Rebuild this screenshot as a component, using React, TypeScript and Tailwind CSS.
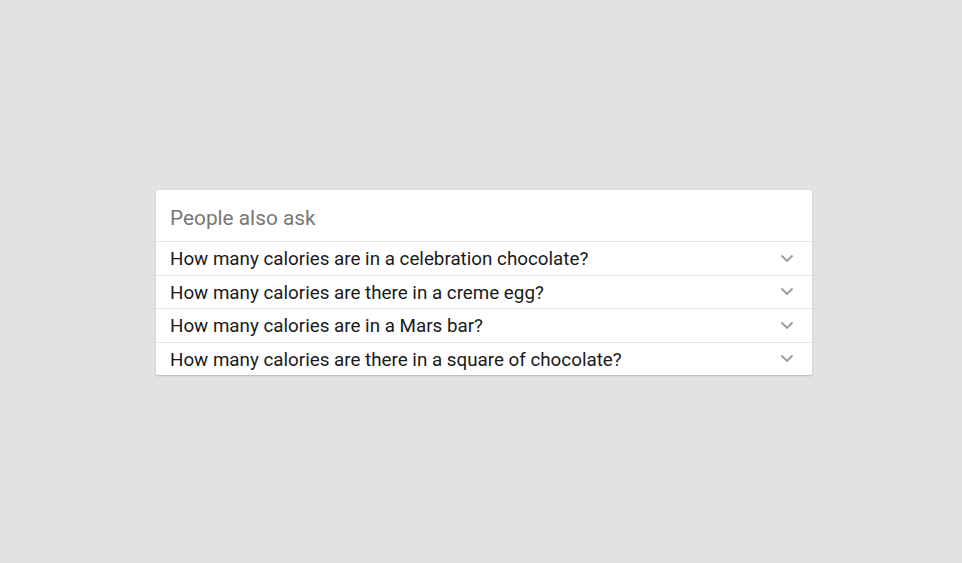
import React from "react";

const items = [
  "How many calories are in a celebration chocolate?",
  "How many calories are there in a creme egg?",
  "How many calories are in a Mars bar?",
  "How many calories are there in a square of chocolate?",
];

function Chevron() {
  return (
    <svg width="14" height="9" viewBox="0 0 14 9" fill="none">
      <path d="M1.5 1.5 L7 7 L12.5 1.5" stroke="#9a9a9a" strokeWidth="1.8" />
    </svg>
  );
}

export default function App() {
  return (
    <div className="w-[962px] h-[563px] bg-[#e2e2e2] flex flex-col pt-[190px] pl-[156px]" style={{ fontFamily: "Roboto, 'Liberation Sans', sans-serif" }}>
      <div className="w-[656px] bg-white rounded-[2px] shadow-[0_1px_2px_rgba(0,0,0,0.2)]">
        <div className="h-[51px] flex items-center pl-[14px] text-[20.8px] text-[#777777] pt-[6px]">People also ask</div>
        {items.map((t) => (
          <div key={t} className="h-[33.5px] border-t border-[#e6e6e6] flex items-center justify-between pl-[14px] pr-[18px] text-[18.8px] text-[#1a1a1a]">
            <span className="pt-[2px]">{t}</span>
            <Chevron />
          </div>
        ))}
      </div>
    </div>
  );
}
